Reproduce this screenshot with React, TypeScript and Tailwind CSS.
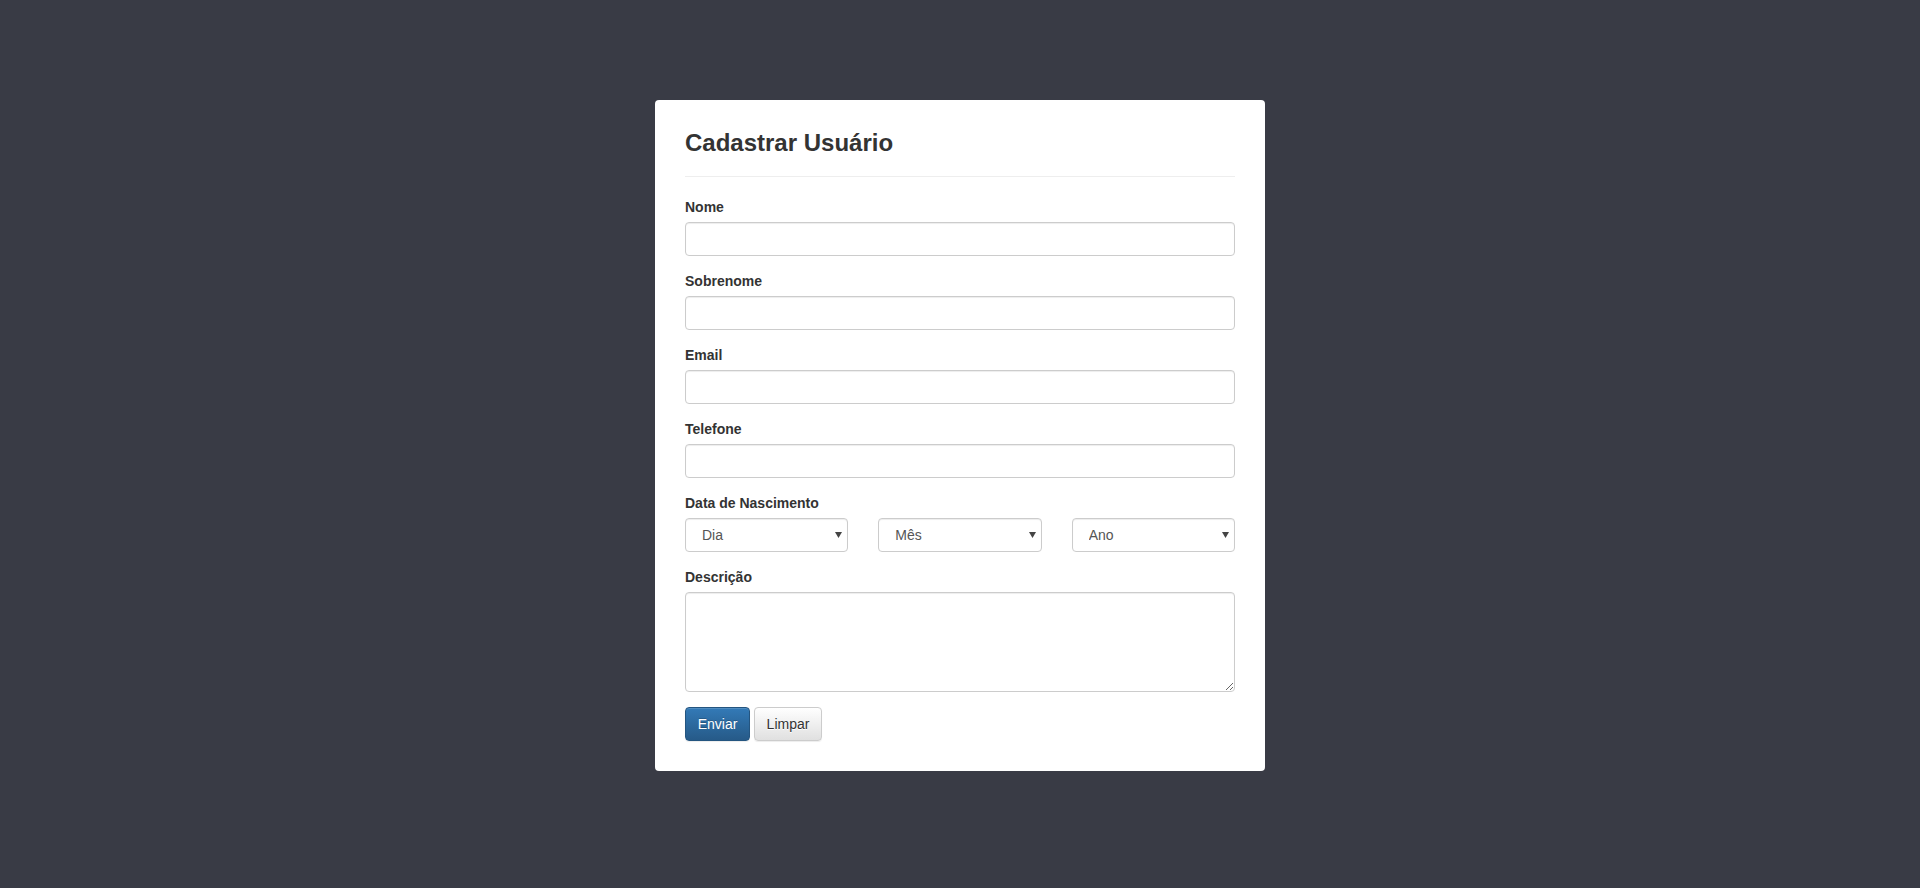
import type { FC } from "react";

const Label: FC<{ text: string }> = ({ text }) => (
    <label className="mb-[5px] block text-[14px] font-bold leading-[20px] text-[#333]">{text}</label>
)

const Input: FC = () => (
    <input
        type="text"
        className="block h-[34px] w-full rounded-[4px] border border-[#ccc] bg-white px-3 text-[14px] text-[#555] shadow-[inset_0_1px_1px_rgba(0,0,0,0.075)] outline-none"
    />
)

const Select: FC<{ text: string }> = ({ text }) => (
    <div className="relative">
        <select className="block h-[34px] w-full appearance-none rounded-[4px] border border-[#ccc] bg-white pl-4 pr-6 text-[14px] text-[#555] shadow-[inset_0_1px_1px_rgba(0,0,0,0.075)] outline-none">
            <option>{text}</option>
        </select>
        <svg className="pointer-events-none absolute right-[6px] top-[14px]" width="7" height="6" viewBox="0 0 7 6">
            <path d="M0 0 H7 L3.5 6 Z" fill="#444" />
        </svg>
    </div>
)

function App() {
    return (
        <div className="min-h-[888px] w-full bg-[#393b45] pt-[100px] font-['Liberation_Sans',Arial,sans-serif]">
            <div className="mx-auto w-[610px] rounded-[4px] bg-white p-[30px]">
                <h3 className="text-[24px] font-bold leading-[26.4px] text-[#333]">Cadastrar Usuário</h3>
                <hr className="my-5 border-0 border-t border-[#eee]" />
                <form>
                    <div className="mb-[15px]">
                        <Label text="Nome" />
                        <Input />
                    </div>
                    <div className="mb-[15px]">
                        <Label text="Sobrenome" />
                        <Input />
                    </div>
                    <div className="mb-[15px]">
                        <Label text="Email" />
                        <Input />
                    </div>
                    <div className="mb-[15px]">
                        <Label text="Telefone" />
                        <Input />
                    </div>
                    <div className="mb-[15px]">
                        <Label text="Data de Nascimento" />
                        <div className="grid grid-cols-3 gap-[30px]">
                            <Select text="Dia" />
                            <Select text="Mês" />
                            <Select text="Ano" />
                        </div>
                    </div>
                    <div className="mb-[15px]">
                        <Label text="Descrição" />
                        <textarea className="block h-[100px] w-full rounded-[4px] border border-[#ccc] bg-white px-3 py-[6px] text-[14px] text-[#555] shadow-[inset_0_1px_1px_rgba(0,0,0,0.075)] outline-none" />
                    </div>
                    <div className="flex gap-1">
                        <button
                            type="button"
                            className="h-[34px] w-[65px] rounded-[4px] border border-[#245580] bg-gradient-to-b from-[#337ab7] to-[#265a88] text-[14px] text-white [text-shadow:0_-1px_0_rgba(0,0,0,0.2)] shadow-[inset_0_1px_0_rgba(255,255,255,0.15),0_1px_1px_rgba(0,0,0,0.075)]"
                        >
                            Enviar
                        </button>
                        <button
                            type="button"
                            className="h-[34px] w-[68px] rounded-[4px] border border-[#ccc] bg-gradient-to-b from-white to-[#e0e0e0] text-[14px] text-[#333] [text-shadow:0_1px_0_#fff] shadow-[inset_0_1px_0_rgba(255,255,255,0.15),0_1px_1px_rgba(0,0,0,0.075)]"
                        >
                            Limpar
                        </button>
                    </div>
                </form>
            </div>
        </div>
    )
}

export default App
